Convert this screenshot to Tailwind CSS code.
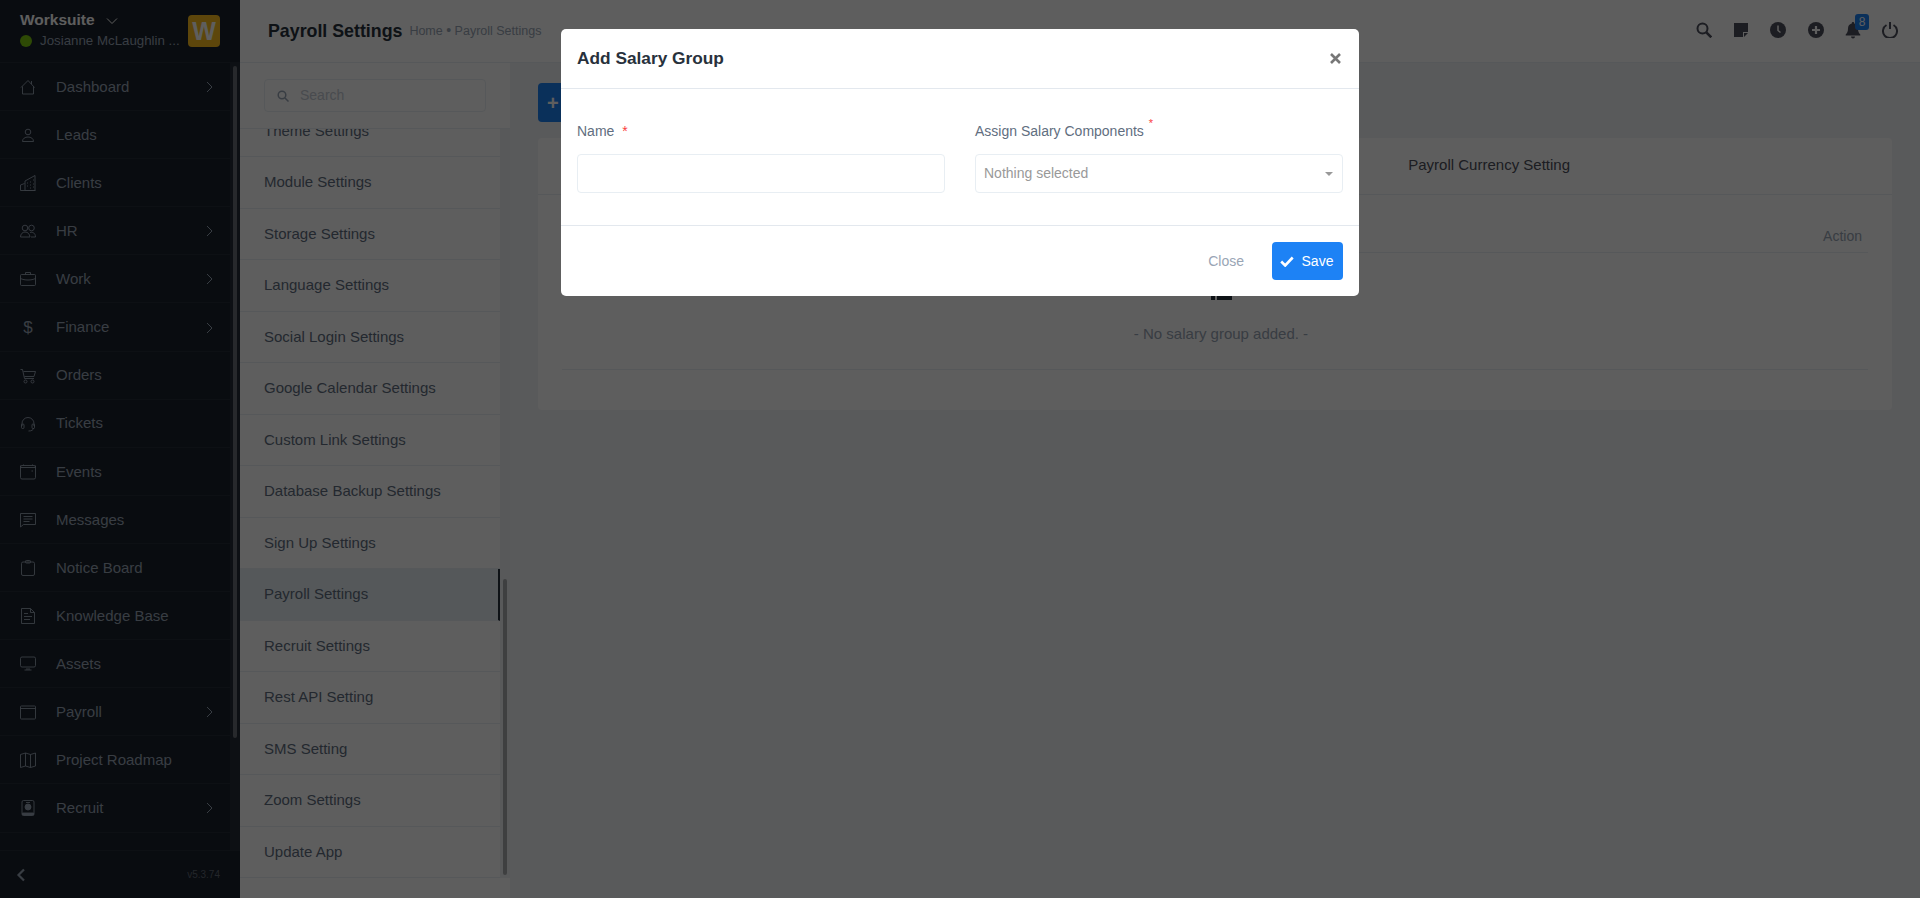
<!DOCTYPE html>
<html lang="en">
<head>
    <meta charset="UTF-8">
    <meta name="viewport" content="width=device-width, initial-scale=1.0">
    <title>Payroll Settings</title>
    <script src="https://cdn.jsdelivr.net/npm/@tailwindcss/browser@4"></script>
</head>
<body class="h-[898px] overflow-hidden bg-[#f2f4f7] font-['Liberation_Sans',Arial,sans-serif] text-[15px] text-[#28313c]">
<div class="flex h-[898px]">

    <!-- main menu -->
    <aside class="flex h-full w-[240px] shrink-0 flex-col bg-[#1a212c]">
        <div class="flex h-[63px] shrink-0 items-start justify-between border-b border-white/5 pl-5 pr-5 pt-[9px]">
            <div>
                <div class="flex items-center text-[15.5px] font-bold leading-[21px] text-white">
                    Worksuite
                    <svg class="ml-[11px] mt-[2px]" width="12" height="8" viewBox="0 0 12 8" fill="none" stroke="#fff" stroke-width="1"><path d="M1 1.5l5 5 5-5"/></svg>
                </div>
                <div class="mt-[2px] flex items-center text-[13.3px] leading-[18px] text-[#99a5b5]">
                    <span class="mr-[8px] h-3 w-3 rounded-full bg-[#7cc80f]"></span>
                    Josianne McLaughlin ...
                </div>
            </div>
            <div class="mt-[6px] flex h-8 w-8 items-center justify-center rounded bg-[#fbbf1f] text-[25px] font-bold leading-none text-white">W</div>
        </div>
        <div class="relative flex min-h-0 flex-1">
            <nav id="menu" class="w-[230px] overflow-hidden"></nav>
            <div class="w-[10px] bg-[#252c36] pt-[3px]">
                <div class="mx-auto h-[672px] w-1 rounded bg-[#6b7078]"></div>
            </div>
        </div>
        <div class="flex h-[48px] shrink-0 items-center justify-between border-t border-white/5 pl-4 pr-5">
            <svg width="10" height="14" viewBox="0 0 10 14" fill="none" stroke="#99a5b5" stroke-width="2.2"><path d="M8 1.5L2.5 7 8 12.5"/></svg>
            <span class="text-[10px] text-[#5f6875]">v5.3.74</span>
        </div>
    </aside>

    <div class="flex min-w-0 flex-1 flex-col">
        <!-- top bar -->
        <header class="flex h-[63px] shrink-0 items-center border-b border-[#e8eef3] bg-white pl-7 pr-[22px]">
            <h1 class="mt-[2px] text-[17.8px] font-bold leading-none text-[#28313c]">Payroll Settings</h1>
            <div class="ml-[7px] text-[12.5px] text-[#99a5b5]">Home <span class="text-[14px] leading-none">&bull;</span> Payroll Settings</div>
            <div class="mb-[2px] ml-auto flex items-center gap-[21px] text-[#4d4f5c]">
                <svg width="16" height="16" viewBox="0 0 16 16" fill="none" stroke="currentColor" stroke-width="2"><circle cx="6.500" cy="6.500" r="5"/><path stroke-width="2.600" d="M10.300 10.300l5 5"/></svg>
                <svg class="ml-[1px]" width="14" height="14" viewBox="0 0 14 14" fill="currentColor"><path d="M0 0h14v9h-5v5H0z"/><path d="M10 10h4l-4 4z"/></svg>
                <svg class="ml-[1px]" width="16" height="16" viewBox="0 0 16 16"><circle cx="8" cy="8" r="8" fill="currentColor"/><path d="M8 3.500V8.500l2.500 2" fill="none" stroke="#fff" stroke-width="1.500"/></svg>
                <svg class="ml-[1px]" width="16" height="16" viewBox="0 0 16 16"><circle cx="8" cy="8" r="8" fill="currentColor"/><path d="M8 4v8M4 8h8" stroke="#fff" stroke-width="2.200"/></svg>
                <div class="relative h-4 w-4">
                    <svg width="16" height="17" viewBox="0 0 16 17" fill="currentColor"><path d="M8 0a1.200 1.200 0 0 1 1.200 1.400C11.800 2 13 4 13 6.500c0 3.500 1 4.800 2.300 6V13.500H.7V12.500C2 11.300 3 10 3 6.500 3 4 4.200 2 6.800 1.400A1.200 1.200 0 0 1 8 0zM6 14.500h4a2 2 0 0 1-4 0z"/></svg>
                    <span class="absolute -top-[8px] left-[10px] flex h-4 w-[14px] items-center justify-center rounded-[3px] bg-[#1d82f5] text-[12px] leading-none text-white">8</span>
                </div>
                <svg width="16" height="16" viewBox="0 0 16 16" fill="none" stroke="currentColor" stroke-width="2"><path d="M4.500 3A7 7 0 1 0 11.500 3"/><path d="M8 0v7"/></svg>
            </div>
        </header>

        <div class="flex min-h-0 flex-1">
            <!-- settings menu -->
            <aside class="flex w-[270px] shrink-0 flex-col bg-white">
                <div class="h-[66px] shrink-0 border-b border-[#e8eef3] px-6 pt-[16px]">
                    <div class="flex h-[33px] w-[222px] items-center rounded border border-[#e8eef3] pl-3 text-[14px] text-[#c5cbd5]">
                        <svg class="mr-[11px]" width="12" height="12" viewBox="0 0 12 12" fill="none" stroke="#99a5b5" stroke-width="1.500"><circle cx="5" cy="5" r="3.800"/><path d="M8 8l3.500 3.500"/></svg>
                        Search
                    </div>
                </div>
                <div class="flex h-[749px] shrink-0">
                    <div class="h-full w-[260px] overflow-hidden">
                        <ul id="settings" class="-mt-[23.5px] text-[#616e80]"></ul>
                    </div>
                    <div class="w-[10px] bg-[#eef0f3] pt-[450px]">
                        <div class="mx-auto h-[296px] w-1 rounded bg-[#a9abae]"></div>
                    </div>
                </div>
            </aside>

            <!-- content -->
            <main class="min-w-0 flex-1 pl-7 pr-7 pt-5">
                <button class="flex h-[39px] w-[100px] items-center rounded bg-[#1d82f5] pl-[9px] text-[20px] font-bold leading-none text-white">+</button>
                <section class="mt-4 h-[272px] rounded bg-white">
                    <div class="flex h-[57px] items-center justify-end border-b border-[#e8eef3] pb-[4px] pr-[322px] text-[15px] leading-none text-[#4d4f5c]">Payroll Currency Setting</div>
                    <div class="px-6">
                        <div class="flex h-[58px] items-end justify-end border-b border-[#e8eef3] pb-[5px] pr-[6px] text-[14px] text-[#99a5b5]">Action</div>
                        <div class="flex h-[117px] flex-col items-center border-b border-[#e8eef3] pl-3 pt-[37px]">
                            <svg width="21" height="14" viewBox="0 0 21 14" fill="#28313c"><path d="M0 2h4v8H0zM6 2h15v8H6z"/></svg>
                            <p class="mt-[20px] text-[15px] leading-[20px] text-[#99a5b5]">- No salary group added. -</p>
                        </div>
                    </div>
                </section>
            </main>
        </div>
    </div>
</div>

<!-- modal -->
<div class="fixed inset-0 flex justify-center bg-black/[0.63] pt-[29px]">
    <div class="h-[267px] w-[798px] rounded-[5px] bg-white">
        <div class="flex h-[60px] items-center justify-between border-b border-[#e3e8ee] px-4">
            <h2 class="text-[17.3px] font-bold leading-none text-[#28313c]">Add Salary Group</h2>
            <svg class="mr-[2px]" width="11" height="11" viewBox="0 0 11 11" stroke="#777" stroke-width="2.600"><path d="M1 1l9 9M10 1l-9 9"/></svg>
        </div>
        <div class="grid h-[137px] grid-cols-2 gap-[30px] border-b border-[#e3e8ee] px-4 pt-[32px]">
            <div>
                <label class="block h-[33px] text-[14px] leading-[20px] text-[#616e80]">Name <span class="ml-[4px] text-[#fa3e3e]">*</span></label>
                <div class="h-[39px] rounded border border-[#e8eef3]"></div>
            </div>
            <div>
                <label class="block h-[33px] text-[14px] leading-[20px] text-[#616e80]">Assign Salary Components <sup class="ml-[1px] top-[-9px] text-[11px] text-[#fa3e3e]">*</sup></label>
                <div class="flex h-[39px] items-center justify-between rounded border border-[#e8eef3] pl-2 pr-[9px] text-[14px] text-[#999999]">
                    Nothing selected
                    <svg width="8" height="4" viewBox="0 0 8 4" fill="#999"><path d="M0 0h8L4 4z"/></svg>
                </div>
            </div>
        </div>
        <div class="flex h-[70px] items-center justify-end px-4">
            <span class="mr-[28px] text-[14px] text-[#99a5b5]">Close</span>
            <button class="flex h-[38px] w-[71px] items-center justify-center rounded bg-[#1d82f5] pr-[2px] text-[14px] text-white">
                <svg class="mr-[8px]" width="14" height="11" viewBox="0 0 14 11" fill="none" stroke="#fff" stroke-width="2.600"><path d="M1.200 5.500l4 4 7.500-8"/></svg>
                Save
            </button>
        </div>
    </div>
</div>

<script>
    // sidebar icons, drawn on a 16x16 box
    const icons = {
        home: '<path d="M1 8.500L8 1.500l6.500 7M2.500 7.500V15h11V7.500M11.500 2v3"/>',
        user: '<circle cx="8" cy="5" r="2.800"/><path d="M2.500 14.500c0-3 2.500-4.500 5.500-4.500s5.500 1.500 5.500 4.500z"/>',
        building: '<path d="M.5 15.500V10l4-1.500M5 15.500V6L15 .5v15zM.5 15.500h15M7 8h1M10 7h1M13 5h1M7 11h1M10 10h1M13 9h1M10 13h1M13 12h1"/>',
        people: '<circle cx="5" cy="5" r="2.800"/><circle cx="11.500" cy="5" r="2.800"/><path d="M.5 14c0-3 2-5 4.500-5 3 0 4.500 2 5 5zM10 9.500c3 -1 5.500 1 5.500 4.500H11"/>',
        case: '<rect x=".5" y="3.500" width="15" height="11" rx="1"/><path d="M5.500 3.500V1.500h5v2M.5 7.500c4 2 11 2 15 0"/>',
        cart: '<path d="M.5 1.500h2l2 9h9.500M3.500 3.500h12l-1.500 5H4.500"/><circle cx="5.500" cy="13.500" r="1.500"/><circle cx="12.500" cy="13.500" r="1.500"/>',
        headset: '<path d="M2 10V7.500a6 6 0 0 1 12 0V10M13.500 12c0 2-2 3-5 3"/><rect x="1.500" y="8" width="2.500" height="4.500" rx="1"/><rect x="12" y="8" width="2.500" height="4.500" rx="1"/>',
        calendar: '<rect x=".5" y="1.500" width="15" height="13.500" rx="1.500"/><path d="M.5 1.500v2h15v-2M3.500.5v1M12.500.5v1M11.500 7h1.500"/>',
        message: '<path d="M.5 1.500h15v11H3.500l-3 2.500zM3.500 4.500h9M3.500 7h9M3.500 9.500h6"/>',
        board: '<rect x="1.500" y="2" width="13" height="13.500" rx="1.500"/><rect x="5.500" y=".5" width="5" height="2.500" rx=".8"/>',
        doc: '<path d="M1.500.5h9l4 4v11h-13zM10.500.5v4h4M4 5.500h4M4 8.500h8M4 11.500h6"/>',
        monitor: '<rect x=".5" y="1" width="15" height="10" rx="1.500"/><path d="M6 13h4M4.500 14h7"/>',
        window: '<rect x=".5" y="2" width="15" height="13" rx=".8"/><path d="M.5 4.500h15"/>',
        map: '<path d="M.5 2.500l5-1.500 5 1.500 5-1.500v13l-5 1.500-5-1.500-5 1.500zM5.500 1v13M10.500 2.500v13"/>',
        badge: '<rect x="2" y=".5" width="12" height="15" rx="1.500"/><circle cx="8" cy="7" r="3" fill="currentColor"/><path d="M2.500 13h11v2h-11z" fill="currentColor"/><path d="M6 2.500h4"/>'
    };

    const menuItems = [
        { name: 'Dashboard', icon: 'home', sub: true },
        { name: 'Leads', icon: 'user' },
        { name: 'Clients', icon: 'building' },
        { name: 'HR', icon: 'people', sub: true },
        { name: 'Work', icon: 'case', sub: true },
        { name: 'Finance', dollar: true, sub: true },
        { name: 'Orders', icon: 'cart' },
        { name: 'Tickets', icon: 'headset' },
        { name: 'Events', icon: 'calendar' },
        { name: 'Messages', icon: 'message' },
        { name: 'Notice Board', icon: 'board' },
        { name: 'Knowledge Base', icon: 'doc' },
        { name: 'Assets', icon: 'monitor' },
        { name: 'Payroll', icon: 'window', sub: true },
        { name: 'Project Roadmap', icon: 'map' },
        { name: 'Recruit', icon: 'badge', sub: true }
    ];

    const settingsItems = ['Theme Settings', 'Module Settings', 'Storage Settings', 'Language Settings', 'Social Login Settings', 'Google Calendar Settings', 'Custom Link Settings', 'Database Backup Settings', 'Sign Up Settings', 'Payroll Settings', 'Recruit Settings', 'Rest API Setting', 'SMS Setting', 'Zoom Settings', 'Update App'];

    document.getElementById('menu').innerHTML = menuItems.map(item => `
        <div class="flex h-[48.1px] items-center border-b border-white/5 pl-5 pr-[17px] pt-[1px] text-[#99a5b5]">
            <span class="flex w-4 justify-center text-[17px]">${item.dollar ? '$' : `<svg width="16" height="16" viewBox="0 0 16 16" fill="none" stroke="currentColor" stroke-width="0.9">${icons[item.icon]}</svg>`}</span>
            <span class="ml-5">${item.name}</span>
            ${item.sub ? '<svg class="ml-auto" width="7" height="12" viewBox="0 0 7 12" fill="none" stroke="currentColor" stroke-width="1"><path d="M1 1l5 5-5 5"/></svg>' : ''}
        </div>`).join('');

    document.getElementById('settings').innerHTML = settingsItems.map(name => `
        <li class="flex h-[51.5px] items-center border-b border-[#e8eef3] pl-6 ${name === 'Payroll Settings' ? 'border-r-2 border-r-[#28313c] bg-[#e7eef3]' : ''}">${name}</li>`).join('');
</script>
</body>
</html>
